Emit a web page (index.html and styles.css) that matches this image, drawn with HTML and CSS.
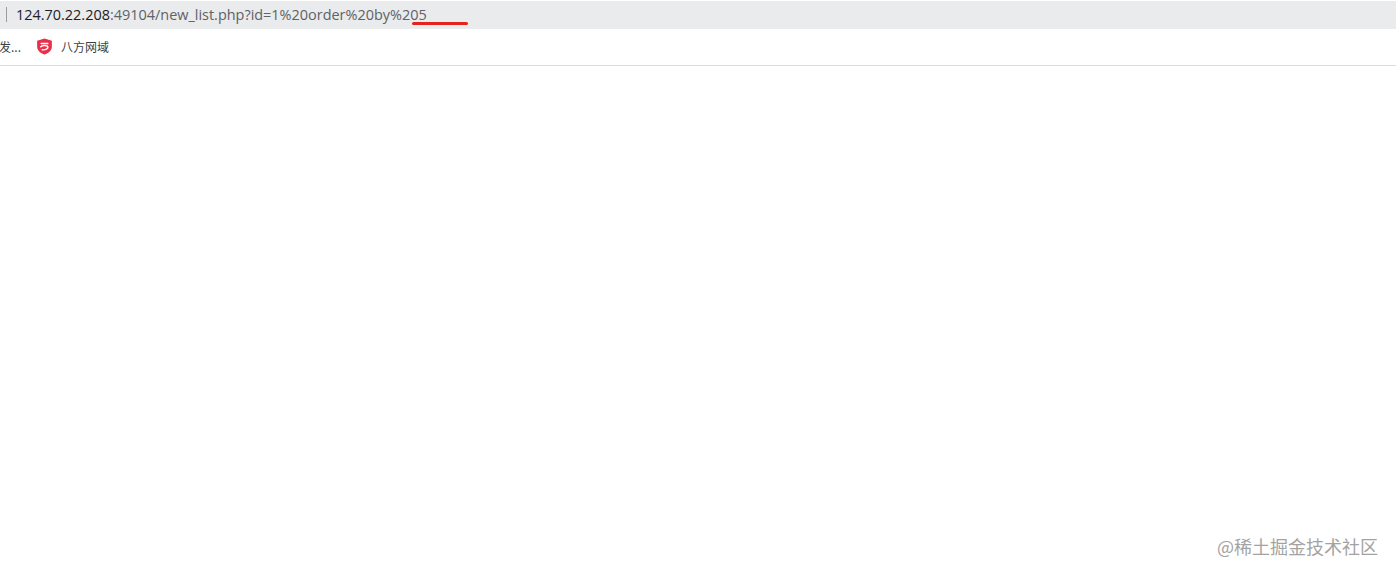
FILE: index.html
```html
<!DOCTYPE html>
<html lang="zh">
<head>
<meta charset="utf-8">
<title>new_list</title>
<link rel="stylesheet" href="styles.css">
</head>
<body>
<div class="page">
  <header class="addressbar">
    <span class="divider"></span>
    <span class="url"><span class="host">124.70.22.208</span>:49104/new_list.php?id=1%20order%20by%205</span>
    <span class="scribble"></span>
  </header>
  <nav class="bookmarks">
    <span class="bm-cut">发...</span>
    <span class="bm">
      <svg class="bm-icon" viewBox="0 0 18 18" aria-hidden="true">
        <path d="M9 .4 16.8 3v6.2c0 3.9-3.4 6.8-7.8 8.4-4.4-1.6-7.8-4.5-7.8-8.4V3z" fill="#e8304a"/>
        <path d="M5.4 5.9h7.2M5 9.4c1-2 7-2.1 7.6 0 .4 2-2.6 3.5-6 3.1" fill="none" stroke="#fff" stroke-width="1.5" stroke-linecap="round"/>
      </svg>
      <span class="bm-label">八方网域</span>
    </span>
  </nav>
  <main class="content"></main>
  <footer class="watermark">@稀土掘金技术社区</footer>
</div>
</body>
</html>
```
FILE: styles.css
```css
* { box-sizing: border-box; }
html, body { margin: 0; padding: 0; background: #fff; }
.page {
  position: relative;
  width: 1396px;
  height: 576px;
  overflow: hidden;
  display: flex;
  flex-direction: column;
  font-family: "Liberation Sans", "Noto Sans CJK SC", sans-serif;
}
.addressbar {
  position: relative;
  height: 28px;
  margin-top: 1px;
  background: #e9ebed;
  display: flex;
  align-items: center;
  padding: 0 0 1px 6px;
}
.divider {
  width: 1px;
  height: 15px;
  background: #9a9da0;
  margin-right: 9px;
}
.url {
  font-family: "Open Sans", "Liberation Sans", sans-serif;
  font-size: 14.45px;
  color: #5f6266;
  white-space: nowrap;
}
.host { color: #1f2124; }
.scribble {
  position: absolute;
  left: 412px;
  top: 21px;
  width: 56px;
  height: 3px;
  border-radius: 2px;
  background: #e5231c;
}
.bookmarks {
  height: 37px;
  border-bottom: 1px solid #dcdcdc;
  padding-bottom: 1px;
  display: flex;
  align-items: center;
  font-size: 12px;
  color: #3c3f43;
  background: #fff;
}
.bm-cut { margin-left: -1px; width: 37px; font-family: "Noto Sans CJK SC", sans-serif; }
.bm { display: flex; align-items: center; gap: 8px; }
.bm-icon { width: 17px; height: 17px; display: block; }
.bm-label { font-family: "Noto Sans CJK SC", sans-serif; }
.content { flex: 1; background: #fff; }
.watermark {
  position: absolute;
  right: 18px;
  top: 534px;
  font-family: "Noto Sans CJK SC", sans-serif;
  font-size: 18px;
  line-height: 24px;
  color: #a3a3a3;
  white-space: nowrap;
}
```
